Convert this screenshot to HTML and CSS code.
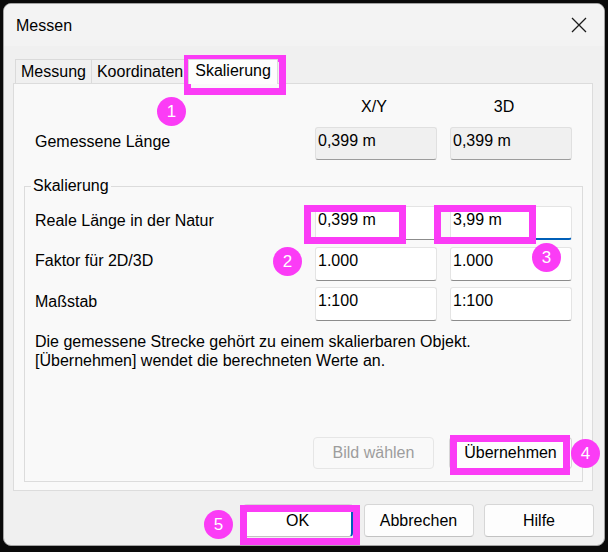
FILE: index.html
```html
<!DOCTYPE html>
<html lang="de">
<head>
    <meta charset="UTF-8">
    <meta name="viewport" content="width=device-width, initial-scale=1.0">
    <title>Messen</title>
    <link rel="stylesheet" href="styles.css">
</head>
<body>
    <div class="screen">
        <div class="window">
            <div class="titlebar">
                <span class="title">Messen</span>
                <button class="close" aria-label="Schließen">
                    <svg width="16" height="16" viewBox="0 0 16 16">
                        <path d="M1 1 L15 15 M15 1 L1 15" stroke="#1b1b1b" stroke-width="1.3" fill="none"/>
                    </svg>
                </button>
            </div>

            <div class="tabs">
                <div class="tab">Messung</div>
                <div class="tab">Koordinaten</div>
                <div class="tab active">Skalierung</div>
            </div>

            <div class="panel">
                <div class="grid-row head">
                    <span></span>
                    <span class="col-head xy">X/Y</span>
                    <span class="col-head d3">3D</span>
                </div>
                <div class="grid-row measured">
                    <label>Gemessene Länge</label>
                    <div class="field readonly">0,399 m</div>
                    <div class="field readonly">0,399 m</div>
                </div>

                <fieldset class="group">
                    <legend>Skalierung</legend>
                    <div class="rows">
                        <div class="grid-row">
                            <label>Reale Länge in der Natur</label>
                            <div class="field">0,399 m</div>
                            <div class="field focused">3,99 m</div>
                        </div>
                        <div class="grid-row">
                            <label>Faktor für 2D/3D</label>
                            <div class="field">1.000</div>
                            <div class="field">1.000</div>
                        </div>
                        <div class="grid-row">
                            <label>Maßstab</label>
                            <div class="field">1:100</div>
                            <div class="field">1:100</div>
                        </div>
                    </div>
                    <p class="note">Die gemessene Strecke gehört zu einem skalierbaren Objekt.<br>[Übernehmen] wendet die berechneten Werte an.</p>
                    <div class="group-buttons">
                        <button class="btn pick" disabled>Bild wählen</button>
                        <button class="btn apply">Übernehmen</button>
                    </div>
                </fieldset>
            </div>

            <div class="footer">
                <button class="btn default">OK</button>
                <button class="btn">Abbrechen</button>
                <button class="btn">Hilfe</button>
            </div>
        </div>

        <!-- annotations -->
        <div class="mark mark-tab"></div>
        <div class="mark mark-xy"></div>
        <div class="mark mark-3d"></div>
        <div class="mark mark-apply"></div>
        <div class="mark mark-ok"></div>
        <span class="badge b1">1</span>
        <span class="badge b2">2</span>
        <span class="badge b3">3</span>
        <span class="badge b4">4</span>
        <span class="badge b5">5</span>
    </div>
</body>
</html>
```

FILE: styles.css
```css
* {
    margin: 0;
    padding: 0;
    box-sizing: border-box;
    font-family: "Liberation Sans", Arial, sans-serif;
}

body {
    background: #0a0a0a;
    color: #000;
    font-size: 16px;
    line-height: 19px;
    overflow: hidden;
}

.screen {
    position: relative;
    width: 608px;
    height: 552px;
}

/* Window frame */
.window {
    margin: 3px 0 0 3px;
    width: 602px;
    height: 543px;
    background: #f0f0f0;
    border: 1px solid #a3a3a3;
    border-radius: 8px;
    overflow: hidden;
}

.titlebar {
    height: 42px;
    display: flex;
    align-items: center;
    justify-content: space-between;
    background: #f3f3f3;
    padding-left: 12px;
}

.close {
    width: 46px;
    height: 42px;
    margin-right: 2px;
    border: none;
    background: transparent;
    display: flex;
    align-items: center;
    justify-content: center;
}

/* Tabs */
.tabs {
    display: flex;
    margin: 13px 0 0 11px;
    height: 24px;
}

.tab {
    height: 24px;
    line-height: 24px;
    padding: 0 5px;
    border: 1px solid #dadada;
    border-bottom: none;
    margin-right: -1px;
    background: #f0f0f0;
}

.tab.active {
    background: #fdfdfd;
    line-height: 22px;
    height: 25px;
    padding: 0 6px;
    position: relative;
    z-index: 1;
}

.panel {
    margin-left: 9px;
    width: 580px;
    height: 408px;
    background: #f9f9f9;
    border: 1px solid #dcdcdc;
    padding: 0 9px 0 10px;
}

/* Label + two columns */
.grid-row {
    display: grid;
    grid-template-columns: 267px 122px 122px;
    column-gap: 13px;
    align-items: center;
}

.panel > .grid-row {
    padding: 0 11px;
}

.head {
    margin-top: 13px;
    height: 19px;
}

.col-head {
    text-align: center;
}

.col-head.xy {
    padding-right: 4px;
}

.col-head.d3 {
    padding-right: 14px;
}

.measured {
    margin-top: 11px;
}

.measured label {
    padding-bottom: 5px;
}

.field {
    height: 34px;
    padding: 3px 2px 0;
    background: #fff;
    border: 1px solid #e4e4e4;
    border-bottom-color: #8c8c8c;
    border-radius: 3px;
    white-space: nowrap;
}

.field.readonly {
    height: 33px;
    background: #f0f0f0;
    border-color: #e0e0e0;
    border-bottom-color: #9c9c9c;
}

.field.focused {
    border-bottom: 2px solid #005fb8;
}

/* Group box */
.group {
    margin-top: 17px;
    border: 1px solid #dcdcdc;
    padding: 11px 10px 12px;
    min-width: 0;
}

.group legend {
    line-height: 18px;
    padding: 0 2px;
    margin-left: -4px;
}

.rows {
    display: flex;
    flex-direction: column;
    gap: 6.5px;
}

.rows label {
    padding-bottom: 6px;
}

.note {
    margin-top: 10.5px;
}

.group-buttons {
    margin-top: 67.5px;
    display: flex;
    justify-content: flex-end;
    gap: 15px;
}

/* Buttons */
.btn {
    height: 33px;
    width: 110px;
    font-size: 16px;
    background: #fdfdfd;
    border: 1px solid #d6d6d6;
    border-bottom-color: #c2c2c2;
    border-radius: 4px;
    color: #000;
}

.btn.pick {
    width: 121px;
    height: 32px;
    background: #f9f9f9;
    border-color: #e6e6e6;
    color: #9d9d9d;
}

.btn.apply {
    width: 123px;
    height: 32px;
}

.btn.default {
    background: #fff;
    border-right: 2px solid #005fb8;
}

.footer {
    display: flex;
    justify-content: flex-end;
    gap: 10.5px;
    padding: 13px 10px 0;
}

/* Annotations drawn over the dialog */
.mark {
    position: absolute;
    border: 7px solid #fb3cf6;
}

.mark-tab { left: 184px; top: 52px; width: 102px; height: 40px; }
.mark-xy { left: 304px; top: 202px; width: 102px; height: 39px; }
.mark-3d { left: 434px; top: 202px; width: 102px; height: 39px; }
.mark-apply { left: 450px; top: 432px; width: 120px; height: 40px; }
.mark-ok { left: 240px; top: 502px; width: 120px; height: 40px; }

.badge {
    position: absolute;
    width: 29px;
    height: 29px;
    border-radius: 50%;
    background: #fb3cf6;
    color: #fff;
    font-size: 17px;
    line-height: 29px;
    text-align: center;
}

.b1 { left: 157px; top: 94px; }
.b2 { left: 273px; top: 244px; }
.b3 { left: 532px; top: 240px; }
.b4 { left: 571px; top: 436px; }
.b5 { left: 204px; top: 507px; }
```
